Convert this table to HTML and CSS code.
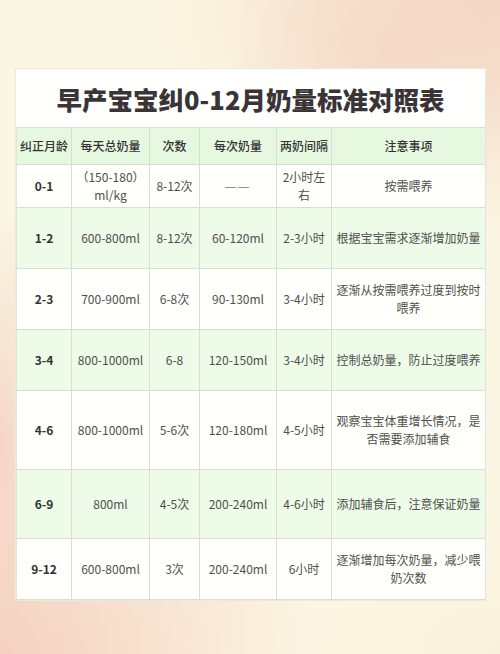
FILE: index.html
```html
<!DOCTYPE html>
<html lang="zh-CN">
<head>
<meta charset="utf-8">
<link rel="stylesheet" href="styles.css">
</head>
<body>
<div class="page">
  <div class="card">
    <div class="title">早产宝宝纠0-12月奶量标准对照表</div>
    <table class="chart">
      <colgroup>
        <col class="c1"><col class="c2"><col class="c3"><col class="c4"><col class="c5"><col class="c6">
      </colgroup>
      <thead>
        <tr class="head">
          <th>纠正月龄</th><th>每天总奶量</th><th>次数</th><th>每次奶量</th><th>两奶间隔</th><th>注意事项</th>
        </tr>
      </thead>
      <tbody>
        <tr class="r43 white"><td class="age">0-1</td><td>（150-180）<br>ml/kg</td><td>8-12次</td><td><span class="dash">——</span></td><td>2小时左<br>右</td><td>按需喂养</td></tr>
        <tr class="r61 green"><td class="age">1-2</td><td>600-800ml</td><td>8-12次</td><td>60-120ml</td><td>2-3小时</td><td>根据宝宝需求逐渐增加奶量</td></tr>
        <tr class="r61 white"><td class="age">2-3</td><td>700-900ml</td><td>6-8次</td><td>90-130ml</td><td>3-4小时</td><td>逐渐从按需喂养过度到按时喂养</td></tr>
        <tr class="r61 green"><td class="age">3-4</td><td>800-1000ml</td><td>6-8</td><td>120-150ml</td><td>3-4小时</td><td>控制总奶量，防止过度喂养</td></tr>
        <tr class="r79 white"><td class="age">4-6</td><td>800-1000ml</td><td>5-6次</td><td>120-180ml</td><td>4-5小时</td><td>观察宝宝体重增长情况，是否需要添加辅食</td></tr>
        <tr class="r69 green"><td class="age">6-9</td><td>800ml</td><td>4-5次</td><td>200-240ml</td><td>4-6小时</td><td>添加辅食后，注意保证奶量</td></tr>
        <tr class="r61 white"><td class="age">9-12</td><td>600-800ml</td><td>3次</td><td>200-240ml</td><td>6小时</td><td>逐渐增加每次奶量，减少喂奶次数</td></tr>
      </tbody>
    </table>
  </div>
</div>
</body>
</html>
```

FILE: styles.css
```css
html, body {
  margin: 0;
  padding: 0;
}
body {
  width: 500px;
  height: 654px;
  overflow: hidden;
  font-family: "Noto Sans CJK SC", "Noto Sans", sans-serif;
  background-color: #fbf6e3;
  background-image:
    radial-gradient(ellipse 340px 240px at 100% 0%, rgba(243, 210, 192, 0.9), rgba(243, 210, 192, 0) 100%),
    radial-gradient(ellipse 160px 130px at 78% 8%, rgba(240, 205, 188, 0.5), rgba(240, 205, 188, 0) 100%),
    radial-gradient(ellipse 320px 270px at 0% 100%, rgba(244, 206, 190, 0.95), rgba(244, 206, 190, 0) 100%),
    radial-gradient(ellipse 60px 240px at 0% 68%, rgba(244, 210, 194, 0.85), rgba(244, 210, 194, 0) 100%),
    radial-gradient(ellipse 200px 130px at 100% 100%, rgba(250, 238, 215, 0.6), rgba(250, 238, 215, 0) 100%);
}
.page {
  padding: 69px 15px 0 16px;
}
.card {
  width: 469px;
  background: #fffffd;
  box-shadow: 0 0 0 1px #ebe8dc;
}
.title {
  height: 58px;
  display: flex;
  align-items: center;
  justify-content: center;
  font-size: 25.5px;
  font-weight: 900;
  color: #3a3437;
}
.chart {
  width: 469px;
  table-layout: fixed;
  border-collapse: collapse;
  font-size: 12px;
  color: #4f4f4f;
}
.c1 { width: 55px; }
.c2 { width: 78px; }
.c3 { width: 50px; }
.c4 { width: 77px; }
.c5 { width: 55px; }
.c6 { width: 154px; }
.chart th, .chart td {
  border: 1px solid #d9ddd2;
  text-align: center;
  vertical-align: middle;
  padding: 0 2px;
  line-height: 18.5px;
}
.chart tr > :first-child { border-left-color: #e3e5dc; }
.chart tr > :last-child { border-right-color: #e3e5dc; }
.head {
  height: 37px;
  background: #e7f8e1;
}
.head th {
  font-weight: 500;
  color: #333;
  font-size: 12px;
}
.white { background: #fffffb; }
.green { background: #edfbe8; }
.r43 { height: 43px; }
.r61 { height: 61px; }
.r69 { height: 69px; }
.r79 { height: 79px; }
.age {
  font-weight: 700;
  color: #333;
}
.dash {
  font-family: "Liberation Sans", sans-serif;
  font-size: 11px;
  letter-spacing: 2px;
  color: #777;
}
```
